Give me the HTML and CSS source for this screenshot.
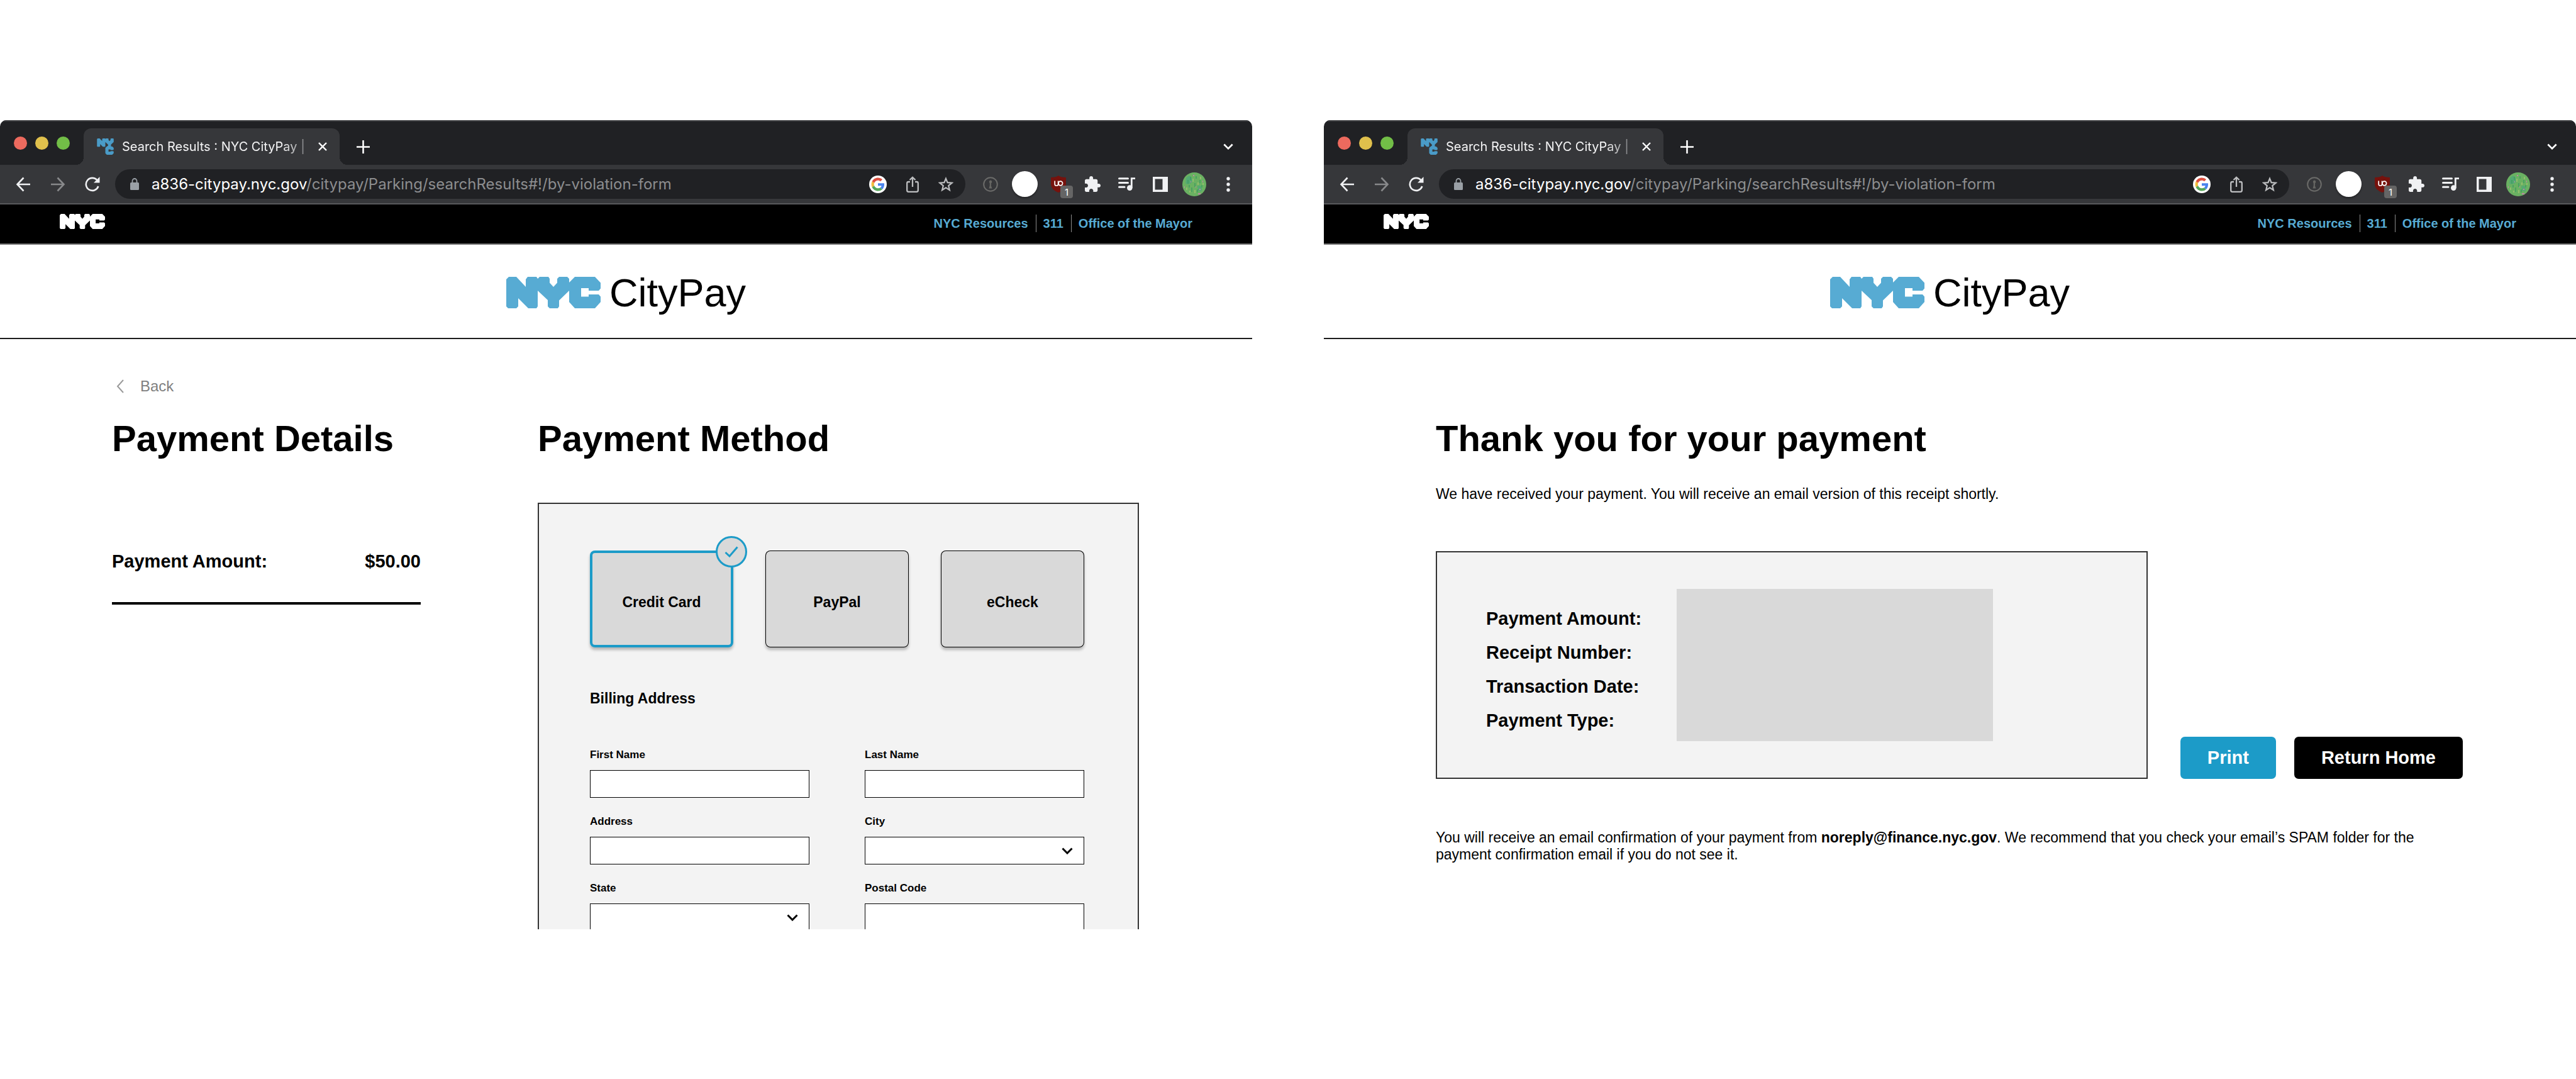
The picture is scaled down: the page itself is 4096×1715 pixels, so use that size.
FILE: index.html
```html
<!DOCTYPE html>
<html lang="en">
<head>
<meta charset="utf-8">
<title>NYC CityPay</title>
<link rel="stylesheet" href="styles.css">
</head>
<body>
<svg class="sprite" aria-hidden="true">
  <symbol id="nyc" viewBox="0 0 150 50"><path d="M4 0H16L31 16V4L34 0H48L50 3L53 0H67L69 3V9.500L75 16L81 9.500V3L84 0H97L100 3V9L109 0H141L150 9.500V18.500L147 22H131V18H119V31.500H131V28H147L150 31.500V40L141 50H109L100 40V22L84 37.500V47L82 50H69L66 47V37L50 22V47L48 50H35L19 34V47L16 50H3L0 47V4Z"/></symbol>
  <symbol id="favicon" viewBox="0 0 100 98"><path d="M4 0H16L31 16V4L34 0H48L50 3L53 0H67L69 3V9L75 16L81 9V3L84 0H97L100 3V22L84 37V48H91L100 57V66L97 70H81V66H69V79H81V76H97L100 79V89L91 98H59L50 89V57L59 48L66 44V37L50 22V47L48 50H35L19 34V47L16 50H3L0 47V4Z"/></symbol>
  <symbol id="arrow" viewBox="0 0 24 24"><path d="M23 12H3M12.500 1.500L2.500 12l10 10.500" fill="none" stroke="currentColor" stroke-width="2.600"/></symbol>
  <symbol id="reload" viewBox="0 0 24 24"><path d="M21.300 15A10 10 0 1 1 19.500 5.500" fill="none" stroke="currentColor" stroke-width="2.600"/><path d="M23.500 0v9.500H14z" fill="currentColor"/></symbol>
  <symbol id="lock" viewBox="0 0 14 19"><rect y="7" width="14" height="12" rx="1.500" fill="currentColor"/><path d="M3.500 8V4.500a3.500 3.500 0 0 1 7 0V8" fill="none" stroke="currentColor" stroke-width="1.800"/></symbol>
  <symbol id="google" viewBox="-8 -8 64 64"><circle cx="24" cy="24" r="32" fill="#fff"/><path fill="#dd4f3f" d="M24 9.500c3.540 0 6.710 1.220 9.210 3.600l6.850-6.850C35.900 2.380 30.470 0 24 0 14.620 0 6.510 5.380 2.560 13.220l7.980 6.190C12.430 13.720 17.740 9.500 24 9.500z"/><path fill="#4a84ee" d="M46.980 24.550c0-1.570-.15-3.090-.38-4.550H24v9.020h12.940c-.58 2.960-2.260 5.480-4.780 7.180l7.730 6c4.510-4.180 7.090-10.360 7.090-17.650z"/><path fill="#f2bc3d" d="M10.530 28.590c-.48-1.450-.76-2.990-.76-4.590s.27-3.140.76-4.590l-7.980-6.190C.920 16.460 0 20.120 0 24c0 3.880.92 7.540 2.560 10.780l7.970-6.190z"/><path fill="#55a85a" d="M24 48c6.480 0 11.930-2.130 15.890-5.810l-7.730-6c-2.150 1.450-4.920 2.300-8.160 2.300-6.260 0-11.570-4.220-13.470-9.910l-7.980 6.190C6.510 42.620 14.620 48 24 48z"/></symbol>
  <symbol id="share" viewBox="0 0 20 26"><path d="M6 9H3.500A2.300 2.300 0 0 0 1.200 11.300V22.500A2.300 2.300 0 0 0 3.500 24.800H16.500A2.300 2.300 0 0 0 18.800 22.500V11.300A2.300 2.300 0 0 0 16.500 9H14M10 17V2M5.500 6L10 1.800L14.500 6" fill="none" stroke="currentColor" stroke-width="2.300"/></symbol>
  <symbol id="star" viewBox="0 0 24 24"><path d="M12 2.800L14.600 9.200L21.600 9.700L16.200 14.200L17.900 21.200L12 17.400L6.100 21.200L7.800 14.200L2.400 9.700L9.400 9.200Z" fill="none" stroke="currentColor" stroke-width="2.200"/></symbol>
  <symbol id="info" viewBox="0 0 24 24"><circle cx="12" cy="12" r="10.800" fill="none" stroke="#6b6b69" stroke-width="2"/><path d="M12 5.500a2.600 2.600 0 0 1 1.300 4.600l-.5 1.400.5 1-.5 1.500 1.700 4.500h-5l1.200-4.500V10a2.600 2.600 0 0 1 1.300-4.500z" fill="#656562"/></symbol>
  <symbol id="shield" viewBox="0 0 24 27"><path d="M12 0C14 2 18 3 24 3V13C24 20 19 24.500 12 27C5 24.500 0 20 0 13V3C6 3 10 2 12 0Z" fill="#76120d"/><path d="M6.200 8.500v5.200a2.300 2.300 0 0 0 2.300 2.300h.8a2.300 2.300 0 0 0 2.300-2.300V8.500" fill="none" stroke="#fff" stroke-width="1.700"/><circle cx="15.300" cy="12.500" r="3.300" fill="none" stroke="#fff" stroke-width="1.700"/></symbol>
  <symbol id="puzzle" viewBox="2 1 21 21"><path fill="currentColor" d="M20.500 11H19V7c0-1.100-.9-2-2-2h-4V3.500C13 2.120 11.880 1 10.500 1S8 2.120 8 3.500V5H4c-1.100 0-1.990.9-1.990 2v3.800H3.500c1.490 0 2.700 1.210 2.700 2.700s-1.210 2.700-2.700 2.700H2V20c0 1.100.9 2 2 2h3.800v-1.500c0-1.490 1.210-2.700 2.700-2.700 1.490 0 2.700 1.210 2.700 2.700V22H17c1.100 0 2-.9 2-2v-4h1.500c1.380 0 2.500-1.120 2.500-2.500S21.880 11 20.500 11z"/></symbol>
  <symbol id="queue" viewBox="0 0 27 21"><path d="M1.500 1.700H15.500M1.500 8.500H15.500M1.500 15.300H10" fill="none" stroke="currentColor" stroke-width="3" stroke-linecap="round"/><circle cx="18.300" cy="16.600" r="4.300" fill="currentColor"/><path d="M21.300 16.600V1.600H27" fill="none" stroke="currentColor" stroke-width="2.800"/></symbol>
  <symbol id="sidebar" viewBox="0 0 24 24"><path fill="currentColor" fill-rule="evenodd" d="M0 0H24V24H0ZM3.500 3.500V20.500H15.500V3.500Z"/></symbol>
  <symbol id="avatar" viewBox="0 0 38 38"><circle cx="19" cy="19" r="19" fill="#6ab162"/><path d="M6 9q6-7 9 0t-3 9-7-1zM24 22q6-3 7 4t-6 3z" fill="#4ba57b" opacity=".7"/><path d="M9 12v6M13 7v5M20 17v6M28 12v5M15 24v7M24 27v5M31 20v4M11 20v4M22 6v4" stroke="#3f9c62" stroke-width="1.500"/><path d="M17 10v5M25 16v4M7 24v4M20 28v5M29 7v4M12 29v3M33 17v3" stroke="#a3c172" stroke-width="1.500"/><path d="M17 4h2v2h-2zM27 26h2v2h-2zM13 14h1v2h-1zM25 33h4v2h-4zM32 13h1v3h-1zM3 22h1v3H3zM21 22h1v2h-1z" fill="#c084a6"/></symbol>
  <symbol id="dots" viewBox="0 0 6 24"><circle cx="3" cy="3" r="2.700"/><circle cx="3" cy="12" r="2.700"/><circle cx="3" cy="21" r="2.700"/></symbol>
  <symbol id="cross" viewBox="0 0 14 14"><path d="M1 1L13 13M13 1L1 13" fill="none" stroke="currentColor" stroke-width="2.400"/></symbol>
  <symbol id="plus" viewBox="0 0 21 21"><path d="M10.500 0V21M0 10.500H21" fill="none" stroke="currentColor" stroke-width="2.600"/></symbol>
  <symbol id="chevron" viewBox="0 0 18 11"><path d="M1.500 1.500L9 9L16.500 1.500" fill="none" stroke="currentColor" stroke-width="3"/></symbol>
  <symbol id="chevron-left" viewBox="0 0 12 22"><path d="M11 1L2 11L11 21" fill="none" stroke="currentColor" stroke-width="2"/></symbol>
  <symbol id="check" viewBox="0 0 22 18"><path d="M1.500 10L8 16L20.500 1.500" fill="none" stroke="currentColor" stroke-width="3"/></symbol>
</svg>

<main class="board">
  <section class="window window-form">
    <div class="titlebar">
      <span class="lights"><i class="light red"></i><i class="light yellow"></i><i class="light green"></i></span>
      <div class="tab">
        <svg class="favicon"><use href="#favicon"/></svg>
        <span class="tab-title">Search Results : NYC CityPay |</span>
        <button class="icon-button" aria-label="Close tab"><svg class="i-cross"><use href="#cross"/></svg></button>
      </div>
      <button class="icon-button new-tab" aria-label="New tab"><svg class="i-plus"><use href="#plus"/></svg></button>
      <button class="icon-button tab-search" aria-label="Search tabs"><svg class="i-tabs"><use href="#chevron"/></svg></button>
    </div>
    <div class="toolbar">
      <div class="nav">
        <button class="icon-button" aria-label="Back"><svg class="i-24"><use href="#arrow"/></svg></button>
        <button class="icon-button forward" aria-label="Forward"><svg class="i-24"><use href="#arrow"/></svg></button>
        <button class="icon-button" aria-label="Reload"><svg class="i-24"><use href="#reload"/></svg></button>
      </div>
      <div class="omnibox">
        <svg class="i-lock"><use href="#lock"/></svg>
        <span class="url"><span class="host">a836-citypay.nyc.gov</span>/citypay/Parking/searchResults#!/by-violation-form</span>
        <span class="omni-actions">
          <svg class="i-google"><use href="#google"/></svg>
          <svg class="i-share"><use href="#share"/></svg>
          <svg class="i-24"><use href="#star"/></svg>
        </span>
      </div>
      <div class="extensions">
        <button class="icon-button" aria-label="Passwords"><svg class="i-24"><use href="#info"/></svg></button>
        <button class="icon-button" aria-label="Extension"><span class="disc"></span></button>
        <button class="icon-button blocker" aria-label="Ad blocker"><svg class="i-shield"><use href="#shield"/></svg><span class="badge">1</span></button>
        <button class="icon-button" aria-label="Extensions"><svg class="i-puzzle"><use href="#puzzle"/></svg></button>
        <button class="icon-button" aria-label="Media"><svg class="i-queue"><use href="#queue"/></svg></button>
        <button class="icon-button" aria-label="Side panel"><svg class="i-24"><use href="#sidebar"/></svg></button>
        <button class="icon-button" aria-label="Profile"><svg class="i-avatar"><use href="#avatar"/></svg></button>
        <button class="icon-button" aria-label="Menu"><svg class="i-dots"><use href="#dots"/></svg></button>
      </div>
    </div>
    <nav class="citybar">
      <svg class="nyc-small" role="img" aria-label="NYC"><use href="#nyc"/></svg>
      <div class="city-links">
        <a href="#">NYC Resources</a><a href="#">311</a><a href="#">Office of the Mayor</a>
      </div>
    </nav>
    <header class="brand">
      <svg class="nyc-large" role="img" aria-label="NYC"><use href="#nyc"/></svg>
      <span class="brand-name">CityPay</span>
    </header>
    <div class="page">
      <a class="back" href="#"><svg class="i-back"><use href="#chevron-left"/></svg>Back</a>
      <div class="checkout">
        <section>
          <h1 class="heading">Payment Details</h1>
          <div class="amount"><span>Payment Amount:</span><span>$50.00</span></div>
        </section>
        <section>
          <h1 class="heading">Payment Method</h1>
          <form class="panel">
            <div class="methods">
              <label class="method selected"><input class="method-input" type="radio" name="method" checked>Credit Card<span class="tick"><svg class="i-check"><use href="#check"/></svg></span></label>
              <label class="method"><input class="method-input" type="radio" name="method">PayPal</label>
              <label class="method"><input class="method-input" type="radio" name="method">eCheck</label>
            </div>
            <h2 class="subheading">Billing Address</h2>
            <div class="fields">
              <div class="field"><label for="first">First Name</label><input class="control" id="first" type="text"></div>
              <div class="field"><label for="last">Last Name</label><input class="control" id="last" type="text"></div>
              <div class="field"><label for="address">Address</label><input class="control" id="address" type="text"></div>
              <div class="field"><label for="city">City</label><span class="select"><select class="control" id="city"><option></option></select><svg class="i-select"><use href="#chevron"/></svg></span></div>
              <div class="field"><label for="state">State</label><span class="select"><select class="control" id="state"><option></option></select><svg class="i-select"><use href="#chevron"/></svg></span></div>
              <div class="field"><label for="postal">Postal Code</label><input class="control" id="postal" type="text"></div>
            </div>
          </form>
        </section>
      </div>
    </div>
  </section>

  <section class="window">
    <div class="titlebar">
      <span class="lights"><i class="light red"></i><i class="light yellow"></i><i class="light green"></i></span>
      <div class="tab">
        <svg class="favicon"><use href="#favicon"/></svg>
        <span class="tab-title">Search Results : NYC CityPay |</span>
        <button class="icon-button" aria-label="Close tab"><svg class="i-cross"><use href="#cross"/></svg></button>
      </div>
      <button class="icon-button new-tab" aria-label="New tab"><svg class="i-plus"><use href="#plus"/></svg></button>
      <button class="icon-button tab-search" aria-label="Search tabs"><svg class="i-tabs"><use href="#chevron"/></svg></button>
    </div>
    <div class="toolbar">
      <div class="nav">
        <button class="icon-button" aria-label="Back"><svg class="i-24"><use href="#arrow"/></svg></button>
        <button class="icon-button forward" aria-label="Forward"><svg class="i-24"><use href="#arrow"/></svg></button>
        <button class="icon-button" aria-label="Reload"><svg class="i-24"><use href="#reload"/></svg></button>
      </div>
      <div class="omnibox">
        <svg class="i-lock"><use href="#lock"/></svg>
        <span class="url"><span class="host">a836-citypay.nyc.gov</span>/citypay/Parking/searchResults#!/by-violation-form</span>
        <span class="omni-actions">
          <svg class="i-google"><use href="#google"/></svg>
          <svg class="i-share"><use href="#share"/></svg>
          <svg class="i-24"><use href="#star"/></svg>
        </span>
      </div>
      <div class="extensions">
        <button class="icon-button" aria-label="Passwords"><svg class="i-24"><use href="#info"/></svg></button>
        <button class="icon-button" aria-label="Extension"><span class="disc"></span></button>
        <button class="icon-button blocker" aria-label="Ad blocker"><svg class="i-shield"><use href="#shield"/></svg><span class="badge">1</span></button>
        <button class="icon-button" aria-label="Extensions"><svg class="i-puzzle"><use href="#puzzle"/></svg></button>
        <button class="icon-button" aria-label="Media"><svg class="i-queue"><use href="#queue"/></svg></button>
        <button class="icon-button" aria-label="Side panel"><svg class="i-24"><use href="#sidebar"/></svg></button>
        <button class="icon-button" aria-label="Profile"><svg class="i-avatar"><use href="#avatar"/></svg></button>
        <button class="icon-button" aria-label="Menu"><svg class="i-dots"><use href="#dots"/></svg></button>
      </div>
    </div>
    <nav class="citybar">
      <svg class="nyc-small" role="img" aria-label="NYC"><use href="#nyc"/></svg>
      <div class="city-links">
        <a href="#">NYC Resources</a><a href="#">311</a><a href="#">Office of the Mayor</a>
      </div>
    </nav>
    <header class="brand">
      <svg class="nyc-large" role="img" aria-label="NYC"><use href="#nyc"/></svg>
      <span class="brand-name">CityPay</span>
    </header>
    <div class="page page-receipt">
      <h1 class="heading">Thank you for your payment</h1>
      <p class="copy intro">We have received your payment. You will receive an email version of this receipt shortly.</p>
      <div class="receipt-row">
        <div class="receipt">
          <ul class="receipt-labels">
            <li>Payment Amount:</li>
            <li>Receipt Number:</li>
            <li>Transaction Date:</li>
            <li>Payment Type:</li>
          </ul>
          <div class="receipt-values"></div>
        </div>
        <div class="actions">
          <button class="button print">Print</button>
          <button class="button">Return Home</button>
        </div>
      </div>
      <p class="copy">You will receive an email confirmation of your payment from <strong>noreply@finance.nyc.gov</strong>. We recommend that you check your email’s SPAM folder for the payment confirmation email if you do not see it.</p>
    </div>
  </section>
</main>
</body>
</html>
```

FILE: styles.css
```css
* { box-sizing: border-box; margin: 0; }

body {
  background: #fff;
  color: #000;
  font-family: "Liberation Sans", Arial, sans-serif;
}

svg { display: block; flex: none; }
a { color: inherit; text-decoration: none; }
button { font: inherit; border: 0; cursor: pointer; }
.sprite { position: absolute; width: 0; height: 0; }

.board {
  display: flex;
  align-items: flex-start;
  gap: 114px;
  padding-top: 191px;
}
.window {
  flex: 1 1 0;
  min-width: 0;
  overflow: hidden;
  border-radius: 10px 10px 0 0;
  background: #fff;
}
.window-form { aspect-ratio: 1991 / 1286; }

/* Browser chrome */
.titlebar {
  display: flex;
  align-items: center;
  height: 71px;
  padding: 0 30px 0 22px;
  border-top: 2px solid #404144;
  background: #202124;
  color: #fff;
  font-family: Inter, sans-serif;
}
.lights { display: flex; gap: 13px; }
.light { width: 21px; height: 21px; border-radius: 50%; }
.red { background: #ed6a5e; }
.yellow { background: #e0c04c; }
.green { background: #72be47; }
.tab {
  position: relative;
  display: flex;
  align-items: center;
  align-self: flex-end;
  width: 407px;
  height: 58px;
  margin-left: 22px;
  padding: 0 20px 0 21px;
  border-radius: 12px 12px 0 0;
  background: #36373a;
}
.tab::before, .tab::after {
  content: "";
  position: absolute;
  bottom: 0;
  width: 12px;
  height: 12px;
}
.tab::before { right: 100%; background: radial-gradient(circle at 0 0, transparent 12px, #36373a 12px); }
.tab::after { left: 100%; background: radial-gradient(circle at 100% 0, transparent 12px, #36373a 12px); }
.favicon { width: 27px; height: 26px; fill: #4a9bc7; }
.tab-title {
  flex: 1;
  margin: 0 14px 0 13px;
  overflow: hidden;
  white-space: nowrap;
  font-size: 20px;
  line-height: 26px;
  color: #f4f4f5;
  mask-image: linear-gradient(to right, #000 85%, rgba(0, 0, 0, .3));
}
.icon-button {
  display: flex;
  align-items: center;
  justify-content: center;
  padding: 0;
  background: none;
  color: inherit;
}
.new-tab { align-self: flex-end; height: 58px; margin-left: 27px; }
.tab-search { align-self: flex-end; height: 58px; margin-left: auto; }
.toolbar {
  display: flex;
  align-items: center;
  padding: 7px 11px 7px 25px;
  border-bottom: 2px solid #58595c;
  background: #36373a;
  color: #f0f1f3;
  font-family: Inter, sans-serif;
}
.nav { display: flex; gap: 31px; margin-right: 24px; }
.forward { color: #88898b; transform: scaleX(-1); }
.omnibox {
  flex: 1;
  display: flex;
  align-items: center;
  height: 47px;
  padding: 0 19px 0 24px;
  border-radius: 24px;
  background: #202124;
}
.i-lock { width: 14px; height: 19px; color: #9aa0a6; }
.url { margin-left: 20px; font-size: 24px; line-height: 30px; color: #8c8d8f; white-space: nowrap; }
.host { color: #fff; }
.omni-actions { display: flex; align-items: center; gap: 31px; margin-left: auto; color: #bdbec0; }
.extensions {
  display: grid;
  grid-template-columns: repeat(8, 54px);
  align-items: center;
  margin-left: 13px;
}
.disc {
  width: 41px;
  height: 41px;
  border-radius: 50%;
  background: #fff;
  box-shadow: 0 2px 3px rgba(0, 0, 0, .4);
}
.blocker { position: relative; }
.badge {
  position: absolute;
  top: 16px;
  right: 4px;
  width: 20px;
  height: 20px;
  border-radius: 4px;
  background: #656565;
  color: #fff;
  font-size: 15px;
  line-height: 22px;
  text-align: center;
}
.i-24 { width: 24px; height: 24px; }
.i-cross { width: 14px; height: 14px; }
.i-plus { width: 21px; height: 21px; }
.i-tabs { width: 16px; height: 10px; }
.i-google { width: 28px; height: 28px; }
.i-share { width: 20px; height: 26px; }
.i-shield { width: 24px; height: 27px; }
.i-puzzle { width: 25px; height: 25px; }
.i-queue { width: 27px; height: 21px; }
.i-avatar { width: 38px; height: 38px; }
.i-dots { width: 6px; height: 24px; fill: currentColor; }

/* Site header */
.citybar {
  display: flex;
  align-items: center;
  justify-content: space-between;
  height: 64px;
  padding: 0 95px 8px;
  border-bottom: 2px solid #777;
  background: #000;
}
.nyc-small { width: 72px; height: 24px; fill: #fff; }
.city-links {
  display: flex;
  padding-top: 5px;
  color: #57abd3;
  font-size: 20px;
  font-weight: 700;
  line-height: 28px;
}
.city-links a + a { margin-left: 12px; padding-left: 11px; border-left: 1px solid #8a8a8a; }
.brand {
  display: flex;
  align-items: center;
  justify-content: center;
  gap: 14px;
  height: 150px;
  padding-top: 4px;
  border-bottom: 2px solid #1c1c1c;
}
.nyc-large { width: 150px; height: 50px; fill: #57abd3; }
.brand-name { font-size: 63px; line-height: 74px; }

/* Page content */
.page { padding: 61px 180px 0 178px; }
.page-receipt { padding-top: 124px; }
.back {
  display: flex;
  align-items: center;
  gap: 26px;
  width: fit-content;
  padding-left: 7px;
  color: #808080;
  font-size: 24px;
  line-height: 28px;
}
.i-back { width: 12px; height: 22px; color: #9a9a9a; }
.checkout {
  display: grid;
  grid-template-columns: 491fr 956fr;
  gap: 186px;
  margin-top: 35px;
}
.heading { font-size: 58px; line-height: 68px; }
.amount {
  display: flex;
  justify-content: space-between;
  margin-top: 144px;
  padding-bottom: 48px;
  border-bottom: 4px solid #000;
  font-size: 29px;
  font-weight: 700;
  line-height: 34px;
}
.panel {
  margin-top: 68px;
  padding: 74px 85px 81px 81px;
  border: 2px solid #333;
  background: #f3f3f3;
}
.methods { display: grid; grid-template-columns: repeat(3, 1fr); gap: 51px; }
.method {
  position: relative;
  display: flex;
  align-items: center;
  justify-content: center;
  height: 154px;
  padding-top: 10px;
  border-radius: 8px;
  background: #d9d9d9;
  box-shadow: inset 0 0 0 1px #000, 0 4px 4px rgba(0, 0, 0, .25);
  font-size: 23px;
  font-weight: 700;
  line-height: 28px;
}
.selected { box-shadow: inset 0 0 0 4px #1c9bc8, 0 4px 4px rgba(0, 0, 0, .25); }
.method-input { position: absolute; opacity: 0; }
.tick {
  position: absolute;
  top: -23px;
  right: -22px;
  display: flex;
  align-items: center;
  justify-content: center;
  width: 50px;
  height: 50px;
  border: 3px solid #1c9bc8;
  border-radius: 50%;
  background: #d9d9d9;
  color: #1c9bc8;
}
.i-check { width: 22px; height: 18px; }
.subheading { margin: 67px 0 66px; font-size: 23px; line-height: 28px; }
.fields { display: grid; grid-template-columns: 1fr 1fr; gap: 28px 88px; }
.field {
  display: grid;
  gap: 14px;
  font-size: 17px;
  font-weight: 700;
  line-height: 20px;
}
.control {
  width: 100%;
  height: 44px;
  padding: 0 16px;
  border: 1px solid #000;
  border-radius: 0;
  background: #fff;
  font: inherit;
  appearance: none;
}
.select { display: grid; align-items: center; }
.select > * { grid-area: 1 / 1; }
.i-select { justify-self: end; width: 18px; height: 11px; margin-right: 18px; pointer-events: none; }

/* Receipt */
.copy { font-size: 23px; line-height: 27px; }
.intro { margin-top: 41px; }
.receipt-row {
  display: flex;
  align-items: flex-end;
  gap: 52px;
  margin: 77px 0 80px;
}
.receipt {
  flex: 1;
  display: grid;
  grid-template-columns: 303px 503px;
  padding: 58px 78px;
  border: 2px solid #333;
  background: #f3f3f3;
}
.receipt-labels {
  padding: 20px 0 6px;
  list-style: none;
  font-size: 29px;
  font-weight: 700;
  line-height: 54px;
}
.receipt-values { background: #d9d9d9; }
.actions { display: flex; gap: 29px; }
.button {
  padding: 16px 43px 17px;
  border-radius: 7px;
  background: #000;
  color: #fff;
  font-size: 29px;
  font-weight: 700;
  line-height: 34px;
}
.print { background: #1c9bc8; }
```
